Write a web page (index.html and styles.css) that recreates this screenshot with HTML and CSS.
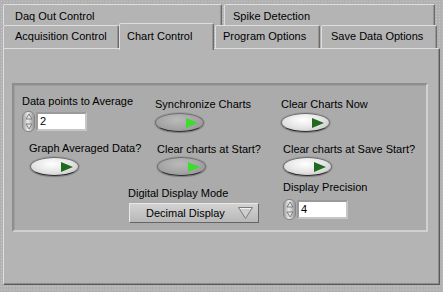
FILE: index.html
```html
<!DOCTYPE html>
<html lang="en">
    <head>
        <meta charset="utf-8">
        <title>Chart Control</title>
        <link rel="stylesheet" href="styles.css">
    </head>
    <body>
      <div class="tabs">
        <div class="tab-row back">
          <div class="tab tab-daq">Daq Out Control</div>
          <div class="tab tab-spike">Spike Detection</div>
        </div>
        <div class="tab-row front">
          <div class="tab tab-acq">Acquisition Control</div>
          <div class="tab tab-chart selected">Chart Control</div>
          <div class="tab tab-prog">Program Options</div>
          <div class="tab tab-save">Save Data Options</div>
        </div>
        <div class="panel">
          <div class="box">
            <div class="col col1">
              <div class="label">Data points to Average</div>
              <div class="field field-avg">
                <div class="spin">
                  <svg width="10" height="19" viewBox="0 0 10 19">
                    <polygon points="5,2 8,7 2,7" fill="#e2e2e2" stroke="#6a6a6a" stroke-width="0.8"/>
                    <polygon points="2,12 8,12 5,17" fill="#e2e2e2" stroke="#6a6a6a" stroke-width="0.8"/>
                  </svg>
                </div>
                <div class="num">2</div>
              </div>
              <div class="label lbl-graph">Graph Averaged Data?</div>
              <div class="toggle off tg-graph"><span class="arrow"></span></div>
            </div>
            <div class="col col2">
              <div class="label lbl-sync">Synchronize Charts</div>
              <div class="toggle on tg-sync"><span class="arrow"></span></div>
              <div class="label lbl-start">Clear charts at Start?</div>
              <div class="toggle on tg-start"><span class="arrow"></span></div>
              <div class="label lbl-mode">Digital Display Mode</div>
              <div class="ring">
                <span>Decimal Display</span>
                <svg class="ring-arrow" width="15" height="12" viewBox="0 0 15 12">
                  <polygon points="0.5,0.5 14.5,0.5 7.5,11.5" fill="#cdcdcd" stroke="#7c7c7c" stroke-width="1"/>
                  <polyline points="2,1.5 13,1.5" stroke="#f2f2f2" stroke-width="1"/>
                </svg>
              </div>
            </div>
            <div class="col col3">
              <div class="label lbl-now">Clear Charts Now</div>
              <div class="toggle off tg-now"><span class="arrow"></span></div>
              <div class="label lbl-save">Clear charts at Save Start?</div>
              <div class="toggle off tg-save"><span class="arrow"></span></div>
              <div class="label lbl-prec">Display Precision</div>
              <div class="field field-prec">
                <div class="spin">
                  <svg width="10" height="19" viewBox="0 0 10 19">
                    <polygon points="5,2 8,7 2,7" fill="#e2e2e2" stroke="#6a6a6a" stroke-width="0.8"/>
                    <polygon points="2,12 8,12 5,17" fill="#e2e2e2" stroke="#6a6a6a" stroke-width="0.8"/>
                  </svg>
                </div>
                <div class="num">4</div>
              </div>
            </div>
          </div>
        </div>
      </div>
    </body>
</html>
```

FILE: styles.css
```css
body { margin: 0; width: 443px; height: 292px; overflow: hidden; background-color: #b2b2b2; background-image: radial-gradient(#c6c6c6 0.7px, transparent 0.9px); background-size: 3px 3px; font-family: "Liberation Sans", Arial, sans-serif; font-size: 11px; color: #000; }

.tabs { padding: 4px 0 0 3px; }
.tab-row { display: flex; }
.tab-row.back { gap: 2px; height: 21px; }
.tab-row.front { height: 23px; }
.tab { box-sizing: border-box; background: #b4b4b4; border: 1px solid; border-bottom: none; border-color: #dedede #6c6c6c transparent #dedede; border-radius: 2px 2px 0 0; line-height: 14px; white-space: nowrap; box-shadow: inset -1px 0 #959595; }
.tab-row.back .tab { height: 21px; padding-top: 4px; }
.tab-row.front .tab { height: 23px; padding-top: 3px; }
.tab-daq { width: 219px; padding-left: 11px; }
.tab-spike { width: 211px; padding-left: 8px; }
.tab-acq { width: 116px; padding-left: 11px; }
.tab-chart { width: 95px; padding-left: 7px; }
.tab-prog { width: 105px; padding-left: 7px; margin-left: 1px; }
.tab-save { width: 116px; padding-left: 9px; margin-left: 1px; }
.tab-row.front .tab.selected { height: 27px; margin-top: -2px; padding-top: 5px; position: relative; z-index: 2; }

.panel { position: relative; z-index: 1; box-sizing: border-box; width: 437px; height: 237px; background: #b4b4b4; border: 1px solid; border-color: #dedede #5a5a5a #5a5a5a #dedede; box-shadow: inset -1px -1px #8c8c8c; padding: 34px 0 0 8px; }

.box { box-sizing: border-box; width: 416px; height: 149px; background: #ababab; border: 2px solid; border-color: #8e8e8e #d0d0d0 #d0d0d0 #8e8e8e; box-shadow: inset 1px 1px #9e9e9e; display: flex; padding: 10px 0 0 8px; }
.col { display: flex; flex-direction: column; align-items: flex-start; }
.col1 { width: 106px; }
.col2 { width: 153px; }
.col3 { flex: 1; }

.label { line-height: 13px; white-space: nowrap; }

.field { display: flex; align-items: center; margin-top: 3px; }
.spin { box-sizing: border-box; width: 13px; height: 21px; border-radius: 6px; border: 1px solid #858585; background: linear-gradient(90deg, #a2a2a2, #ececec 45%, #c4c4c4 70%, #989898); }
.spin svg { display: block; margin-left: 1px; }
.num { box-sizing: border-box; width: 51px; height: 19px; margin-left: 1px; background: #fff; border: 2px solid; border-color: #9a9a9a #c6c6c6 #c6c6c6 #9a9a9a; padding-left: 2px; line-height: 15px; }

.toggle { box-sizing: border-box; width: 49px; height: 19px; border-radius: 50%; border: 1px solid #6e6e6e; border-bottom-color: #2e2e2e; box-shadow: 0 1px 1px #7c7c7c, 0 0 0 1px #9c9c9c; display: flex; align-items: center; padding-left: 30px; }
.toggle.on { background: radial-gradient(ellipse at 45% 35%, #bababa, #a2a2a2 60%, #8e8e8e); }
.toggle.off { background: radial-gradient(ellipse at 45% 35%, #ffffff, #e2e2e2 55%, #b8b8b8); }
.arrow { width: 0; height: 0; border-top: 5px solid transparent; border-bottom: 5px solid transparent; border-left: 12px solid #1f6a1f; }
.toggle.on .arrow { border-left-color: #3ddc2e; }

.lbl-graph { margin-top: 10px; margin-left: 7px; }
.tg-graph { margin-top: 2px; margin-left: 8px; }
.lbl-sync { margin-top: 3px; margin-left: 27px; }
.tg-sync { margin-top: 2px; margin-left: 27px; }
.lbl-start { margin-top: 11px; margin-left: 29px; }
.tg-start { margin-top: 1px; margin-left: 29px; }
.lbl-mode { margin-top: 11px; }
.lbl-now { margin-top: 3px; }
.tg-now { margin-top: 2px; }
.lbl-save { margin-top: 11px; margin-left: 2px; }
.tg-save { margin-top: 1px; margin-left: 2px; }
.lbl-prec { margin-top: 5px; margin-left: 2px; }
.field-prec { margin-top: 5px; margin-left: 2px; }

.ring { box-sizing: border-box; width: 130px; height: 20px; margin-top: 3px; margin-left: 1px; display: flex; align-items: center; padding-left: 16px; background: linear-gradient(#d2d2d2, #b8b8b8); border: 1px solid; border-color: #e8e8e8 #656565 #656565 #e8e8e8; }
.ring-arrow { margin-left: auto; margin-right: 5px; }
```
